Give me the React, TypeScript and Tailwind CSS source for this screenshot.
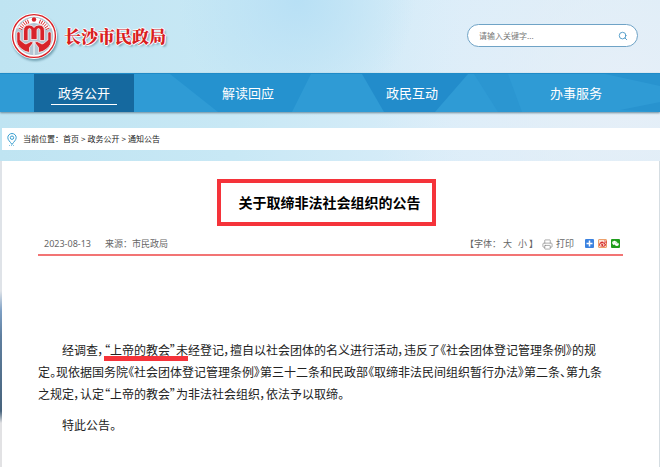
import { Printer, Search } from "lucide-react";
import { FaWeibo, FaWeixin } from "react-icons/fa";

const navItems = ["政务公开", "解读回应", "政民互动", "办事服务"];
const crumbs = ["首页", "政务公开", "通知公告"];

function Emblem() {
  const rays = [-62, -54, -46, -38, -30, -22, 22, 30, 38, 46, 54, 62];
  const hand =
    "M5.800 19.500q1.700-1.500 3.400 0v7.500l4.300 3.500q1.500 1 3-.2l3-1.600q2.500-.8 2.500 1.300l-3.500 4.500v5q-4.500-.5-8-3.500L8 33.500q-2-2-2.200-5Z";
  return (
    <svg viewBox="0 0 46 46" className="size-[46px] shrink-0 drop-shadow-[1px_2px_1px_#6f9fb0]" aria-hidden="true">
      <circle cx="23" cy="23" r="23" fill="#fff" />
      <circle cx="23" cy="23" r="21.4" fill="#fff" stroke="#d8232a" strokeWidth="1.4" />
      <circle cx="23" cy="23" r="19.2" fill="#b3c6d3" />
      <path d="M6 15Q23 -6 40 15L36 17Q23 3 10 17Z" fill="#fff" />
      {rays.map((a) => (
        <path key={a} d="M23 5.500V9.500" stroke="#d8232a" strokeWidth="0.9" transform={`rotate(${a} 23 23)`} />
      ))}
      <circle cx="23" cy="6.500" r="2.200" fill="#d8232a" />
      <path d="M23 28V42" stroke="#fff" strokeWidth="1" />
      <path
        d="M12.500 27.500V18q0-6 5.500-6 3.500 0 5 2.500 1.500-2.500 5-2.500 5.500 0 5.500 6v9.500H29V17.500q0-2-1.500-2t-1.500 2V26.500h-6v-9q0-2-1.500-2t-1.500 2v10Z"
        fill="#d8232a"
        stroke="#fff"
        strokeWidth="0.7"
      />
      <path d={hand} fill="#d8232a" stroke="#fff" strokeWidth="0.7" />
      <path d={hand} fill="#d8232a" stroke="#fff" strokeWidth="0.7" transform="translate(46 0) scale(-1 1)" />
    </svg>
  );
}

function Header() {
  return (
    <header className="flex h-[73px] items-center justify-between pb-0.5 pl-[11px] pr-[22px]">
      <a href="#home" className="flex items-center gap-[7px]">
        <Emblem />
        <span className="font-['Noto_Serif_CJK_SC','Noto_Sans_CJK_SC',serif] text-[17px] font-black leading-6 text-[#d9201f] [text-shadow:1px_0_0_#fff,-1px_0_0_#fff,0_1px_0_#fff,0_-1px_0_#fff,2px_2px_2px_#7fa8b8]">
          长沙市民政局
        </span>
      </a>
      <form className="flex h-[23px] w-[171px] items-center rounded-full border border-[#6fa3c6] bg-white pl-[11px] pr-[9px]">
        <input
          type="text"
          aria-label="请输入关键字"
          placeholder="请输入关键字..."
          className="min-w-0 flex-1 text-[8px] text-[#555] outline-none placeholder:text-[#777]"
        />
        <button type="button" aria-label="搜索">
          <Search className="size-[10px] text-[#3c8fc2]" />
        </button>
      </form>
    </header>
  );
}

function Nav() {
  return (
    <nav className="relative border-t border-[#1f8bc8] bg-[#2f9bd5] px-0.5 shadow-[0_1px_2px_#6b8a9a]">
      <svg className="absolute inset-0 size-full" viewBox="0 0 660 38" preserveAspectRatio="none" aria-hidden="true">
        <path d="M170 0H311L292 38H218Z" fill="#2592cf" />
        <path d="M362 0H468L435 38H384Z" fill="#228ccb" />
        <path d="M474 0H508L522 38H498Z" fill="#2b96d1" />
        <path d="M605 0H660V38L620 36L660 28V12Z" fill="#2893cf" />
      </svg>
      <ul className="relative grid grid-cols-4">
        {navItems.map((item, i) => (
          <li key={item} className="flex justify-center">
            <a
              href={`#nav-${i}`}
              className={`flex h-[38px] w-[100px] justify-center pt-[7px] text-[13px] leading-6 text-white ${i === 0 ? "bg-[#15699f]" : ""}`}
            >
              <span className={`h-6 w-[66px] text-center ${i === 0 ? "border-b border-white" : ""}`}>{item}</span>
            </a>
          </li>
        ))}
      </ul>
    </nav>
  );
}

function Breadcrumb() {
  return (
    <div className="ml-0.5 mt-4 flex h-[22px] items-center bg-white pl-[5px] text-[8px] text-[#222]">
      <svg viewBox="0 0 10 13" className="mr-1.5 h-[13px] w-[10px]" fill="none" stroke="#3a9fd0" aria-hidden="true">
        <path d="M5 11.500C3 8.500 .8 7 .8 4.700a4.200 4.200 0 0 1 8.400 0C9.200 7 7 8.500 5 11.500Z" />
        <circle cx="5" cy="4.700" r="1.700" />
        <path d="M2 12.500h6" strokeWidth="0.6" strokeDasharray="1 1" />
      </svg>
      <span>当前位置：</span>
      {crumbs.map((c, i) => (
        <span key={c} className="flex">
          {i > 0 && <span className="px-0.5">&gt;</span>}
          <a href={`#crumb-${i}`}>{c}</a>
        </span>
      ))}
    </div>
  );
}

function Meta() {
  return (
    <div className="flex h-[22px] items-center border-b-2 border-[#f27474] pl-1.5 pr-[3px] text-[9px] text-[#666]">
      <time className="font-['Noto_Sans','Noto_Sans_CJK_SC',sans-serif]">2023-08-13</time>
      <span className="ml-[14px]">来源：市民政局</span>
      <div className="ml-auto flex items-center">
        <span>【字体：</span>
        <button type="button" className="ml-0.5">大</button>
        <button type="button" className="ml-1.5">小</button>
        <span className="ml-0.5">】</span>
        <button type="button" className="ml-1 flex items-center gap-[3px]">
          <Printer className="size-[11px] text-[#888]" strokeWidth={1.5} />
          打印
        </button>
        <div className="ml-[11px] flex gap-1 pb-0.5">
          <button type="button" aria-label="分享" className="size-[9px] rounded-[1px] bg-[#3b82e0]">
            <svg viewBox="0 0 9 9" stroke="#fff" strokeWidth="1.500" aria-hidden="true">
              <path d="M4.500 1.500v6M1.500 4.500h6" />
            </svg>
          </button>
          <button type="button" aria-label="微博" className="grid size-[9px] place-items-center rounded-[1px] border border-[#eda06a] bg-[#fbe3d4]">
            <FaWeibo className="size-2 text-[#d52c2b]" />
          </button>
          <button type="button" aria-label="微信" className="grid size-[9px] place-items-center rounded-[1px] bg-[#1f9d1c]">
            <FaWeixin className="size-[7px] text-white" />
          </button>
        </div>
      </div>
    </div>
  );
}

function Article() {
  return (
    <div className="mt-[11px] flex grow bg-[linear-gradient(#dfe3e8_130px,#7d9fc4_150px,#5f7f9f_175px,#47637c_250px,#e2e2e4_262px)] pl-0.5">
      <main className="min-w-0 grow border-r border-[#d5dde2] bg-white px-9 pt-[18px]">
        <div className="flex justify-center pr-2">
          <h1 className="flex h-[47px] w-[219px] items-center justify-center border-4 border-[#f5333a] pl-1.5 text-[14px] font-bold text-black">
            关于取缔非法社会组织的公告
          </h1>
        </div>
        <div className="pt-2">
          <Meta />
        </div>
        <div className="whitespace-nowrap pt-[83px] text-[12px] leading-[22px] text-[#222] [font-feature-settings:'palt']">
          <p className="indent-6">
            经调查，
            <span className="relative">
              “上帝的教会”未
              <span className="absolute inset-x-0 top-[15px] h-[5px] bg-[#f5333a]" />
            </span>
            经登记，擅自以社会团体的名义进行活动，违反了《社会团体登记管理条例》的规
            <br />
            定。现依据国务院《社会团体登记管理条例》第三十二条和民政部《取缔非法民间组织暂行办法》第二条、第九条
            <br />
            之规定，认定“上帝的教会”为非法社会组织，依法予以取缔。
          </p>
          <p className="mt-[9px] indent-6">特此公告。</p>
        </div>
      </main>
    </div>
  );
}

export default function App() {
  return (
    <div
      lang="zh-CN"
      className="flex min-h-screen flex-col bg-[#cfe8f3] bg-[radial-gradient(circle_at_45%_0,#b8e0f5_0,transparent_20%),radial-gradient(circle_at_95%_20%,#e6eff8_0,transparent_35%),linear-gradient(90deg,#bfe4f2,#c8e8f5_35%,#daedf9_70%,#d9ecf6)] font-['Noto_Sans_CJK_SC',sans-serif]"
    >
      <Header />
      <Nav />
      <Breadcrumb />
      <Article />
    </div>
  );
}
